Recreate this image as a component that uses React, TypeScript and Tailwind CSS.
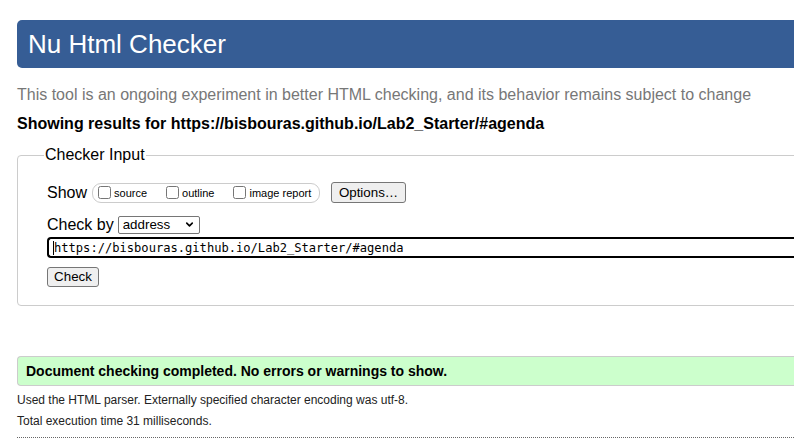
import { ChevronDown } from "lucide-react";

const checks = ["source", "outline", "image report"];

const App: React.FC = () => {
    return (
        <div className="w-[794px] h-[445px] overflow-hidden bg-white text-black font-['Liberation_Sans',Arial,sans-serif]">
            <div className="w-[1000px] pl-[17px]">
                <div className="mt-[20px] h-[48px] rounded-l-[5px] bg-[#365d95] pl-[11px] text-[26px] leading-[48px] text-white">
                    Nu Html Checker
                </div>

                <p className="mt-[17px] text-[16px] leading-[20px] text-[#777]">
                    This tool is an ongoing experiment in better HTML checking, and its behavior remains subject to change
                </p>
                <p className="mt-[9px] text-[16px] leading-[20px] font-bold">
                    Showing results for https://bisbouras.github.io/Lab2_Starter/#agenda
                </p>

                <fieldset className="mt-[11px] rounded-[4px] border border-[#ccc] pl-[29px] pb-[18px]">
                    <legend className="-ml-[3px] px-[1px] text-[16px] leading-[20px]">Checker Input</legend>

                    <div className="mt-[17px] flex h-[21px] items-center">
                        <span className="text-[16px] leading-[20px]">Show</span>
                        <div className="ml-[5px] flex h-[20px] w-[228px] items-center whitespace-nowrap rounded-[9px] border border-[#ccc] pl-[5px]">
                            {checks.map((c, i) => (
                                <label key={c} className={`flex items-center ${i > 0 ? "ml-[19px]" : ""}`}>
                                    <input type="checkbox" className="m-0 h-[13px] w-[13px]" />
                                    <span className="ml-[3px] text-[11px] leading-[14px]">{c}</span>
                                </label>
                            ))}
                        </div>
                        <button className="ml-[11px] h-[21px] w-[75px] rounded-[3px] border border-[#767676] bg-[#efefef] text-[13.33px] leading-[19px]">
                            Options…
                        </button>
                    </div>

                    <div className="mt-[12px] flex h-[19px] items-center">
                        <span className="text-[16px] leading-[20px]">Check by</span>
                        <div className="ml-[4px] flex h-[18px] w-[82px] items-center justify-between rounded-[2px] border border-[#767676] pl-[4px] pr-[4px]">
                            <span className="text-[13.33px] leading-[16px]">address</span>
                            <ChevronDown size={11} strokeWidth={3.5} className="text-black" />
                        </div>
                    </div>

                    <div className="mt-[3px] flex h-[21px] items-center rounded-l-[4px] border-2 border-r-0 border-black pl-[4px]">
                        <span className="h-[14px] w-[1px] bg-black" />
                        <span className="font-['DejaVu_Sans_Mono',monospace] text-[12.1px] leading-[16px]">
                            https://bisbouras.github.io/Lab2_Starter/#agenda
                        </span>
                    </div>

                    <button className="mt-[9px] block h-[20px] w-[52px] rounded-[3px] border border-[#767676] bg-[#efefef] text-[13.33px] leading-[18px]">
                        Check
                    </button>
                </fieldset>

                <div className="mt-[50px] flex h-[30px] items-center rounded-l-[4px] border border-r-0 border-[#ccc] bg-[#ccffcc] pl-[8px]">
                    <span className="text-[14px] font-bold leading-[16px]">
                        Document checking completed. No errors or warnings to show.
                    </span>
                </div>

                <p className="mt-[7px] text-[12px] leading-[14px] text-[#222]">
                    Used the HTML parser. Externally specified character encoding was utf-8.
                </p>
                <p className="mt-[7px] text-[12px] leading-[14px] text-[#222]">
                    Total execution time 31 milliseconds.
                </p>
                <div className="mt-[9px] border-t border-dotted border-[#666]" />
            </div>
        </div>
    );
};

export default App;
